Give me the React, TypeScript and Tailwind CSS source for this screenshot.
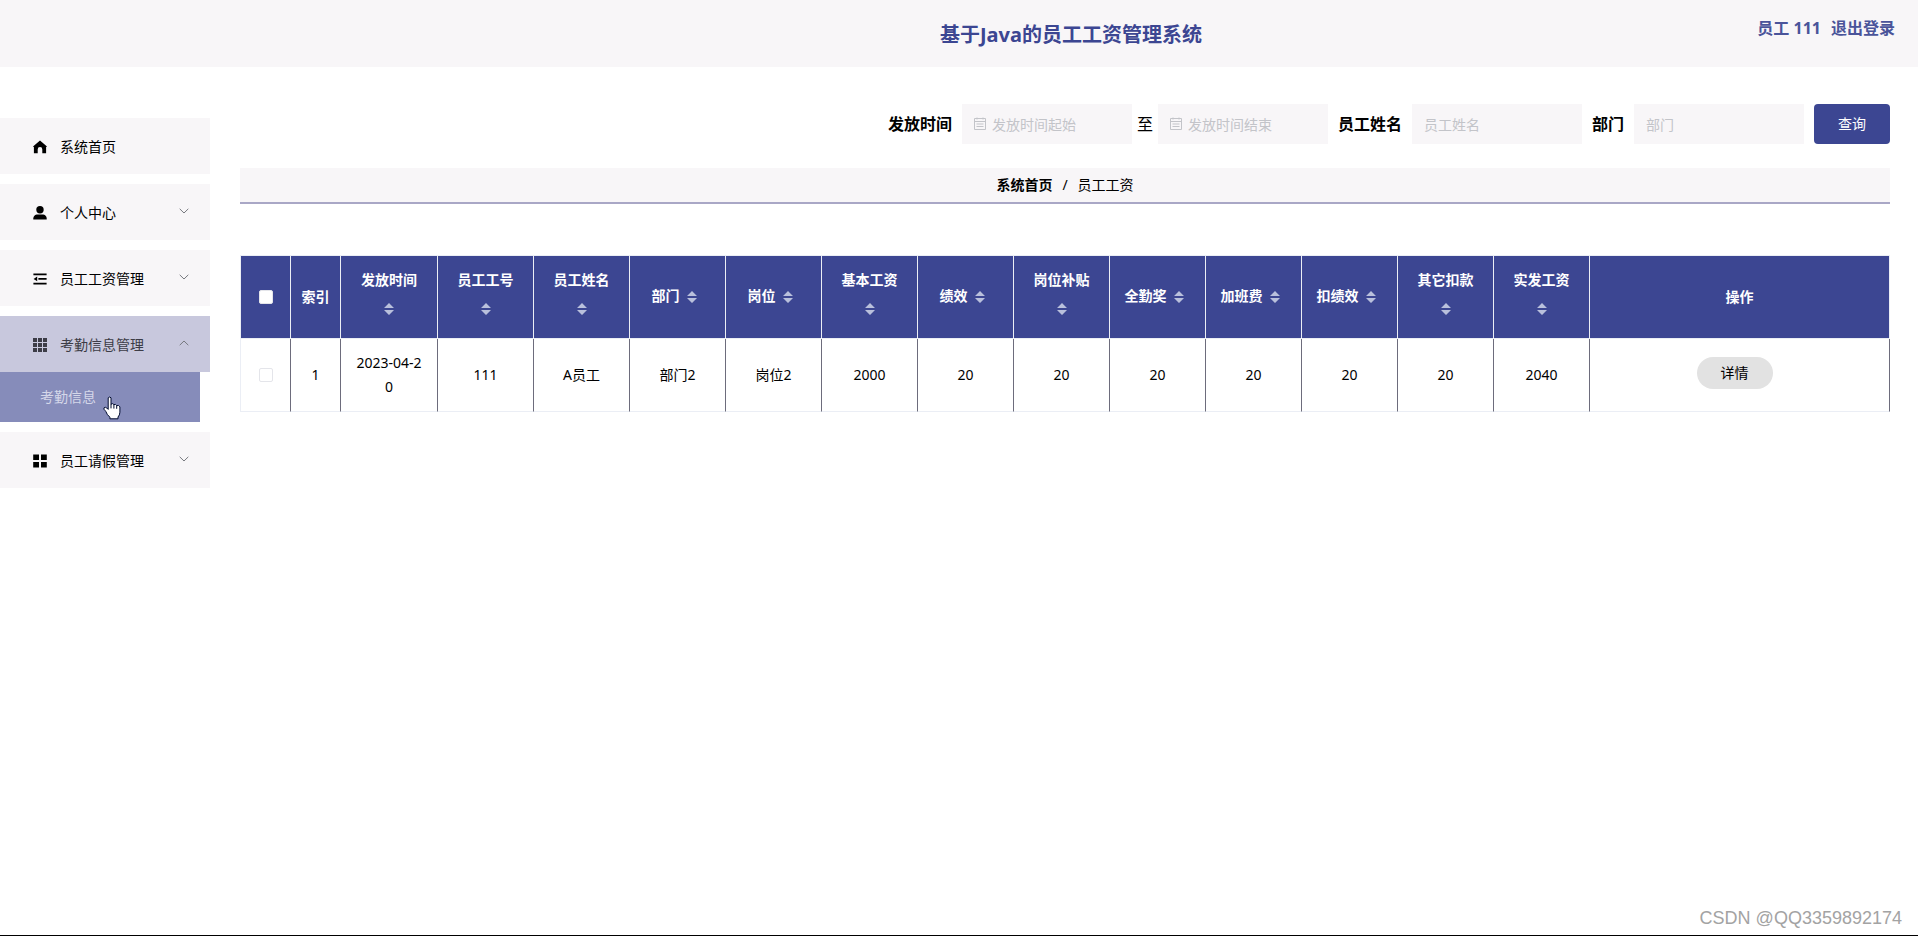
import { useState } from 'react';
import type { ReactNode } from 'react';
import clsx from 'clsx';

interface MenuItem {
    key: string;
    label: string;
    icon: ReactNode;
    children?: string[];
}

interface Column {
    label: string;
    width: string;
}

const HomeIcon = () => (
    <svg viewBox="0 0 14 14" className="size-3.5" fill="currentColor" aria-hidden="true">
        <path d="M7 0.4 13.7 6.2V7H13.1V13.3H9.3V9.4A2.3 2.3 0 0 0 4.7 9.4V13.3H0.9V7H0.3V6.2Z" />
    </svg>
);

const UserIcon = () => (
    <svg viewBox="0 0 14 14" className="size-3.5" fill="currentColor" aria-hidden="true">
        <circle cx="7" cy="3.8" r="3.7" />
        <path d="M3.6 8.4H10.4Q13.6 9.2 13.7 12.4V13.6H0.3V12.4Q0.4 9.2 3.6 8.4Z" />
    </svg>
);

const FoldIcon = () => (
    <svg viewBox="0 0 14 14" className="size-3.5" fill="currentColor" aria-hidden="true">
        <path d="M0.4 1.4H13.6V3.2H0.4ZM5.4 6H13.6V7.8H5.4ZM0.4 10.8H13.6V12.6H0.4ZM4.2 4.5V9.3L0.6 6.9Z" />
    </svg>
);

const GridIcon = () => (
    <svg viewBox="0 0 14 14" className="size-3.5" fill="currentColor" aria-hidden="true">
        <path d="M0 0H4V4H0ZM5 0H9V4H5ZM10 0H14V4H10ZM0 5H4V9H0ZM5 5H9V9H5ZM10 5H14V9H10ZM0 10H4V14H0ZM5 10H9V14H5ZM10 10H14V14H10Z" />
    </svg>
);

const BlocksIcon = () => (
    <svg viewBox="0 0 14 14" className="size-3.5" fill="currentColor" aria-hidden="true">
        <path d="M0.2 0.6H6V6H0.2ZM8 0.6H13.8V6H8ZM0.2 8H6V13.4H0.2ZM8 8H13.8V13.4H8Z" />
    </svg>
);

const CalendarIcon = () => (
    <svg viewBox="0 0 14 14" className="size-3.5" fill="none" stroke="currentColor" aria-hidden="true">
        <path d="M1.5 1.5H12.5V12.5H1.5ZM1.5 4.5H12.5M3.5 7H10.5M3.5 9.5H10.5M4 0.5V2.5M10 0.5V2.5" />
    </svg>
);

const Chevron = ({ open }: { open: boolean }) => (
    <svg
        viewBox="0 0 10 6"
        className={clsx('mb-1 h-1.5 w-2.5', open && 'rotate-180')}
        fill="none"
        stroke="#77797f"
        aria-hidden="true"
    >
        <path d="M0.7 0.8 5 5 9.3 0.8" />
    </svg>
);

const HandCursor = () => (
    <svg viewBox="0 0 18 24" className="pointer-events-none absolute top-6 left-[103px] h-6 w-[18px]" aria-hidden="true">
        <path
            d="M5.2 1.8Q6.7 0.2 8 1.8V8.2Q9.7 6.9 10.9 8.6Q12.6 7.7 13.7 9.6Q15.8 8.8 16.9 10.8V16.2Q16.8 19.2 15 21V22.8H6.9V21.2Q3.8 18.6 2.9 15.6Q2 14.2 0.9 13.2Q0.4 11.4 2.4 11.3Q3.9 11.7 5.2 13.4Z"
            fill="#fff"
            stroke="#000b2e"
            strokeLinejoin="round"
        />
        <path d="M8 8V12.4M10.9 8.7V12.6M13.7 9.6V12.8" fill="none" stroke="#000b2e" />
    </svg>
);

const menu: MenuItem[] = [
    { key: 'home', label: '系统首页', icon: <HomeIcon /> },
    { key: 'center', label: '个人中心', icon: <UserIcon />, children: [] },
    { key: 'salary', label: '员工工资管理', icon: <FoldIcon />, children: [] },
    { key: 'attendance', label: '考勤信息管理', icon: <GridIcon />, children: ['考勤信息'] },
    { key: 'leave', label: '员工请假管理', icon: <BlocksIcon />, children: [] },
];

const columns: Column[] = [
    { label: '发放时间', width: 'w-[97px]' },
    { label: '员工工号', width: 'w-24' },
    { label: '员工姓名', width: 'w-24' },
    { label: '部门', width: 'w-24' },
    { label: '岗位', width: 'w-24' },
    { label: '基本工资', width: 'w-24' },
    { label: '绩效', width: 'w-24' },
    { label: '岗位补贴', width: 'w-24' },
    { label: '全勤奖', width: 'w-24' },
    { label: '加班费', width: 'w-24' },
    { label: '扣绩效', width: 'w-24' },
    { label: '其它扣款', width: 'w-24' },
    { label: '实发工资', width: 'w-24' },
];

const rows = [
    ['2023-04-20', '111', 'A员工', '部门2', '岗位2', '2000', '20', '20', '20', '20', '20', '20', '2040'],
];

const thClass = 'border-r border-b border-[#ebeef5] px-2.5 py-3 font-bold';
const tdClass = 'border-r border-b border-r-[#6d6c7c] border-b-[#ebeef5] px-3.5 py-3';
const inputClass = 'h-10 w-[170px] bg-[#f8f6f8] text-sm text-[#606266] outline-none placeholder:text-[#c3c4c9]';

function Sidebar() {
    const [opened, setOpened] = useState('attendance');

    return (
        <nav className="flex w-[210px] shrink-0 flex-col gap-2.5 pt-[51px] text-sm">
            {menu.map((item) => {
                const open = opened === item.key;
                return (
                    <div key={item.key}>
                        <button
                            type="button"
                            onClick={() => setOpened(open ? '' : item.key)}
                            className={clsx(
                                'flex h-14 w-full items-center pt-0.5 pr-[21px] pl-[33px]',
                                open ? 'bg-[#c8c8dd] text-[#3c3c46]' : 'bg-[#f8f6f8] text-black'
                            )}
                        >
                            {item.icon}
                            <span className="ml-[13px] flex-1 text-left">{item.label}</span>
                            {item.children && <Chevron open={open} />}
                        </button>
                        {open &&
                            item.children?.map((child) => (
                                <a
                                    key={child}
                                    href="#"
                                    className="relative mr-2.5 flex h-[50px] items-center bg-[#868cba] pl-10 text-[#d5d7e9]"
                                >
                                    {child}
                                    <HandCursor />
                                </a>
                            ))}
                    </div>
                );
            })}
        </nav>
    );
}

function SearchBar() {
    return (
        <form className="flex items-center justify-end gap-2.5" onSubmit={(e) => e.preventDefault()}>
            <label htmlFor="start" className="font-bold">发放时间</label>
            <div className="flex items-center gap-[5px]">
                <div className="relative">
                    <span className="absolute top-[13px] left-[11px] text-[#c3c4c9]"><CalendarIcon /></span>
                    <input id="start" placeholder="发放时间起始" className={clsx(inputClass, 'pr-2.5 pl-[30px]')} />
                </div>
                <label htmlFor="end">至</label>
                <div className="relative">
                    <span className="absolute top-[13px] left-[11px] text-[#c3c4c9]"><CalendarIcon /></span>
                    <input id="end" placeholder="发放时间结束" className={clsx(inputClass, 'pr-2.5 pl-[30px]')} />
                </div>
            </div>
            <label htmlFor="name" className="font-bold">员工姓名</label>
            <input id="name" placeholder="员工姓名" className={clsx(inputClass, 'px-3')} />
            <label htmlFor="dept" className="font-bold">部门</label>
            <input id="dept" placeholder="部门" className={clsx(inputClass, 'px-3')} />
            <button type="submit" className="h-10 w-[76px] rounded bg-[#3c4692] text-sm text-white">
                查询
            </button>
        </form>
    );
}

function SortButton({ label }: { label: string }) {
    return (
        <button
            type="button"
            aria-label={`${label}排序`}
            className="inline-flex h-[34px] w-6 items-center justify-center align-middle text-[#b9c0dc]"
        >
            <svg viewBox="0 0 10 12" className="h-3 w-2.5" fill="currentColor" aria-hidden="true">
                <path d="M5 0 10 5H0ZM0 7H10L5 12Z" />
            </svg>
        </button>
    );
}

function Checkbox({ label, checked, onChange }: { label: string; checked: boolean; onChange: () => void }) {
    return (
        <input
            type="checkbox"
            aria-label={label}
            checked={checked}
            onChange={onChange}
            className="mx-auto block size-3.5 appearance-none rounded-xs border border-[#e4e5ea] bg-white checked:bg-[#868cba]"
        />
    );
}

function SalaryTable() {
    const [selected, setSelected] = useState<number[]>([]);
    const allSelected = selected.length === rows.length;

    const toggle = (index: number) => {
        setSelected(selected.includes(index) ? selected.filter((i) => i !== index) : [...selected, index]);
    };

    return (
        <table className="w-full table-fixed border-separate border-spacing-0 border-t border-l border-[#ebeef5] text-center text-sm leading-6">
            <thead className="bg-[#3c4692] text-white">
                <tr>
                    <th className={clsx(thClass, 'w-[50px]')}>
                        <Checkbox
                            label="全选"
                            checked={allSelected}
                            onChange={() => setSelected(allSelected ? [] : rows.map((_, i) => i))}
                        />
                    </th>
                    <th className="w-[50px] border-r border-b border-[#ebeef5] py-3 font-bold">索引</th>
                    {columns.map((col) => (
                        <th key={col.label} className={clsx(thClass, col.width)}>
                            {col.label}
                            <SortButton label={col.label} />
                        </th>
                    ))}
                    <th className={thClass}>操作</th>
                </tr>
            </thead>
            <tbody className="text-black">
                {rows.map((row, index) => (
                    <tr key={index}>
                        <td className={tdClass}>
                            <Checkbox
                                label={`选择第${index + 1}行`}
                                checked={selected.includes(index)}
                                onChange={() => toggle(index)}
                            />
                        </td>
                        <td className={tdClass}>{index + 1}</td>
                        {row.map((value, i) => (
                            <td key={i} className={clsx(tdClass, 'break-all')}>{value}</td>
                        ))}
                        <td className={tdClass}>
                            <button type="button" className="mr-2.5 mb-1 h-8 w-[76px] rounded-full bg-[#e2e2e2]">
                                详情
                            </button>
                        </td>
                    </tr>
                ))}
            </tbody>
        </table>
    );
}

export default function App() {
    return (
        <div className="relative flex min-h-screen flex-col border-b border-black bg-white font-['Noto_Sans','Noto_Sans_CJK_SC',sans-serif] text-black">
            <header className="relative flex h-[67px] items-center justify-center bg-[#f8f6f8] pt-0.5 pl-56 text-[#3c4692]">
                <h1 className="text-xl font-bold">基于Java的员工工资管理系统</h1>
                <div className="absolute top-4 right-[23px] flex gap-2.5 font-bold text-[#4a549a]">
                    <span>员工 111</span>
                    <a href="#">退出登录</a>
                </div>
            </header>
            <div className="flex flex-1">
                <Sidebar />
                <main className="min-w-0 flex-1 pt-[37px] pr-7 pl-[30px]">
                    <SearchBar />
                    <div className="mt-6 mb-[51px] flex h-9 items-center justify-center gap-2.5 border-b-2 border-[#a9a7c6] bg-[#f8f6f8] text-sm">
                        <a href="#" className="font-bold">系统首页</a>
                        <span>/</span>
                        <span>员工工资</span>
                    </div>
                    <SalaryTable />
                </main>
            </div>
            <div className="absolute right-4 bottom-[3px] font-['Liberation_Sans',sans-serif] text-lg text-[#a3a3a3]">
                CSDN @QQ3359892174
            </div>
        </div>
    );
}
